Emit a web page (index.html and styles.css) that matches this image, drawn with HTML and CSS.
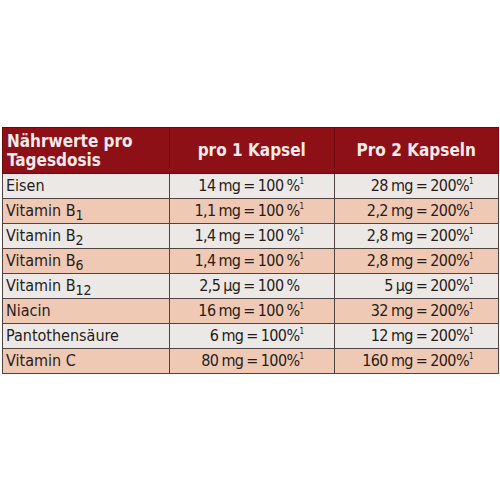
FILE: index.html
```html
<!DOCTYPE html>
<html lang="de">
<head>
    <meta charset="UTF-8">
    <title>Nährwerte</title>
    <link rel="stylesheet" href="styles.css">
</head>
<body>
<div id="page-container">
    <table class="nutrients">
        <thead>
            <tr>
                <th class="name-col">Nährwerte pro<br>Tagesdosis</th>
                <th>pro 1 Kapsel</th>
                <th>Pro 2 Kapseln</th>
            </tr>
        </thead>
        <tbody>
            <tr class="light">
                <td>Eisen</td>
                <td class="val one">14 mg = 100 %<sup>1</sup></td>
                <td class="val two">28 mg = 200%<sup>1</sup></td>
            </tr>
            <tr class="pink">
                <td>Vitamin B<sub>1</sub></td>
                <td class="val one">1,1 mg = 100 %<sup>1</sup></td>
                <td class="val two">2,2 mg = 200%<sup>1</sup></td>
            </tr>
            <tr class="light">
                <td>Vitamin B<sub>2</sub></td>
                <td class="val one">1,4 mg = 100 %<sup>1</sup></td>
                <td class="val two">2,8 mg = 200%<sup>1</sup></td>
            </tr>
            <tr class="pink">
                <td>Vitamin B<sub>6</sub></td>
                <td class="val one">1,4 mg = 100 %<sup>1</sup></td>
                <td class="val two">2,8 mg = 200%<sup>1</sup></td>
            </tr>
            <tr class="light">
                <td>Vitamin B<sub>12</sub></td>
                <td class="val one">2,5 µg = 100 %<sup class="blank">1</sup></td>
                <td class="val two">5 µg = 200%<sup>1</sup></td>
            </tr>
            <tr class="pink">
                <td>Niacin</td>
                <td class="val one">16 mg = 100 %<sup>1</sup></td>
                <td class="val two">32 mg = 200%<sup>1</sup></td>
            </tr>
            <tr class="light">
                <td>Pantothensäure</td>
                <td class="val one">6 mg = 100%<sup>1</sup></td>
                <td class="val two">12 mg = 200%<sup>1</sup></td>
            </tr>
            <tr class="pink">
                <td>Vitamin C</td>
                <td class="val one">80 mg = 100%<sup>1</sup></td>
                <td class="val two">160 mg = 200%<sup>1</sup></td>
            </tr>
        </tbody>
    </table>
</div>
</body>
</html>
```

FILE: styles.css
```css
body {
    margin: 0;
    background-color: #ffffff;
    font-family: "DejaVu Sans Condensed", "Liberation Sans Narrow", "Open Sans", sans-serif;
    color: #271c1a;
}

#page-container {
    padding: 127px 1px 0 2px;
}

.nutrients {
    width: 497px;
    border-collapse: collapse;
    table-layout: fixed;
}

.nutrients th {
    background-color: #8c1015;
    color: #f7eaea;
    font-size: 17px;
    font-weight: bold;
    height: 45px;
    padding: 0 4px;
    border: 1px solid #6e0a0e;
    text-align: center;
    line-height: 19px;
}

.nutrients th.name-col {
    text-align: left;
    width: 158px;
}

.nutrients td {
    height: 24px;
    padding: 0 0 0 3px;
    border: 1px solid #4d4443;
    font-size: 16px;
    line-height: 24px;
    white-space: nowrap;
}

.light td {
    background-color: #ebe8e5;
}

.pink td {
    background-color: #f0c9b4;
}

.val {
    text-align: right;
    letter-spacing: -0.6px;
    word-spacing: -1px;
}

.one {
    padding-right: 30px !important;
}

.two {
    padding-right: 25px !important;
}

sub {
    font-size: 14px;
    vertical-align: -4px;
    line-height: 0;
}

sup {
    font-size: 8px;
    vertical-align: 7px;
    line-height: 0;
}

.blank {
    visibility: hidden;
}
```
